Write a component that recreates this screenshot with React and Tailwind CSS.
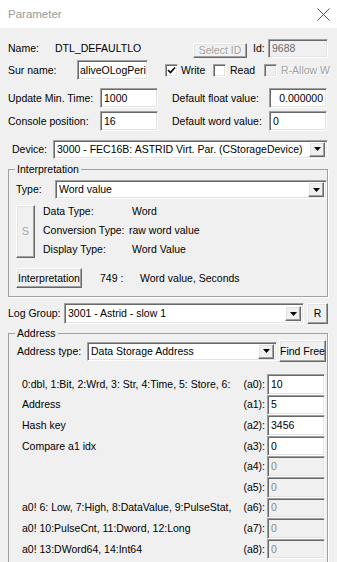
import React from "react";

const sunken =
  "bg-white border border-t-[#a0a0a0] border-l-[#a0a0a0] border-b-white border-r-white shadow-[inset_1px_1px_0_#696969,inset_-1px_-1px_0_#e3e3e3]";
const sunkenDis =
  "bg-[#f0f0f0] border border-t-[#a0a0a0] border-l-[#a0a0a0] border-b-white border-r-white shadow-[inset_1px_1px_0_#696969,inset_-1px_-1px_0_#e3e3e3]";
const raised =
  "bg-[#f0f0f0] border border-t-white border-l-white border-b-[#696969] border-r-[#696969] shadow-[inset_-1px_-1px_0_#a0a0a0,inset_1px_1px_0_#e3e3e3]";

function Input({ value, className = "", disabled = false, right = false }) {
  return (
    <div
      className={`${disabled ? sunkenDis : sunken} flex items-center px-[3px] overflow-hidden whitespace-nowrap ${
        right ? "justify-end" : ""
      } ${disabled ? "text-[#8a8a8a]" : ""} ${className}`}
    >
      {value}
    </div>
  );
}

function Arrow() {
  return (
    <svg width="7" height="4" viewBox="0 0 7 4">
      <path d="M0 0H7L3.5 4Z" fill="#000" />
    </svg>
  );
}

function Combo({ value, className = "" }) {
  return (
    <div className={`${sunken} flex items-center pl-[3px] pr-[2px] ${className}`}>
      <span className="flex-1 whitespace-nowrap overflow-hidden">{value}</span>
      <div className={`${raised} w-[16px] h-[15px] flex items-center justify-center shrink-0`}>
        <Arrow />
      </div>
    </div>
  );
}

function Check({ checked = false, disabled = false }) {
  return (
    <div
      className={`w-[13px] h-[13px] shrink-0 ${disabled ? "bg-[#f0f0f0]" : "bg-white"} border border-t-[#a0a0a0] border-l-[#a0a0a0] border-b-white border-r-white shadow-[inset_1px_1px_0_#696969,inset_-1px_-1px_0_#e3e3e3] flex items-center justify-center`}
    >
      {checked && (
        <svg width="9" height="9" viewBox="0 0 9 9">
          <path d="M1 4L3.5 6.5L8 1.5" stroke="#000" strokeWidth="1.6" fill="none" />
        </svg>
      )}
    </div>
  );
}

const dis = "text-[#a0a0a0] [text-shadow:1px_1px_0_#fff]";

function AddrRow({ label, tag, value, disabled }) {
  return (
    <div className="flex items-center h-[20.6px]">
      <span className="flex-1 pl-[13px] whitespace-nowrap">{label}</span>
      <span className="mr-[2px]">{tag}</span>
      <Input value={value} disabled={disabled} className="w-[58px] h-full mr-[2px]" />
    </div>
  );
}

export default function App() {
  return (
    <div className="w-[337px] h-[562px] overflow-hidden bg-[#f0f0f0] font-['Liberation_Sans',Arial,sans-serif] text-[10.5px] leading-[13px] text-black">
      {/* title bar */}
      <div className="h-[28px] bg-white flex items-center justify-between pl-[8px] pr-[7px]">
        <span className="text-[11.5px] text-[#999999]">Parameter</span>
        <svg width="13" height="13" viewBox="0 0 13 13">
          <path d="M0.5 0.5L12.5 12.5M12.5 0.5L0.5 12.5" stroke="#555" strokeWidth="1" />
        </svg>
      </div>

      <div className="pl-[8px]">
        {/* row 1 */}
        <div className="flex items-center h-[19px] mt-[11px]">
          <span className="w-[47px]">Name:</span>
          <span className="w-[138px]">DTL_DEFAULTLO</span>
          <div className={`${raised} w-[54px] h-[15px] flex items-center justify-center mt-[3px] ${dis}`}>
            Select ID
          </div>
          <span className="ml-[6px] w-[15px]">Id:</span>
          <Input value="9688" disabled className="w-[60px] h-[19px] !text-[#6d6d6d]" />
        </div>

        {/* row 2 */}
        <div className="flex items-center h-[20px] mt-[2px]">
          <span className="w-[69px]">Sur name:</span>
          <Input value="aliveOLogPeri" className="w-[71px] h-[20px] !px-[2px]" />
          <div className="ml-[17px]">
            <Check checked />
          </div>
          <span className="ml-[3px] w-[32px]">Write</span>
          <Check />
          <span className="ml-[4px] w-[34px]">Read</span>
          <Check disabled />
          <span className={`ml-[4px] whitespace-nowrap ${dis}`}>R-Allow W</span>
        </div>

        {/* row 3 */}
        <div className="flex items-center h-[20px] mt-[8px]">
          <span className="w-[92px]">Update Min. Time:</span>
          <Input value="1000" className="w-[58px] h-[20px]" />
          <span className="ml-[14px] w-[97px]">Default float value:</span>
          <Input value="0.000000" right className="w-[58px] h-[20px]" />
        </div>

        {/* row 4 */}
        <div className="flex items-center h-[20px] mt-[3px]">
          <span className="w-[92px]">Console position:</span>
          <Input value="16" className="w-[58px] h-[20px]" />
          <span className="ml-[14px] w-[97px]">Default word value:</span>
          <Input value="0" className="w-[58px] h-[20px]" />
        </div>

        {/* device */}
        <div className="flex items-center h-[18px] mt-[9px]">
          <span className="ml-[4px] w-[41px]">Device:</span>
          <Combo value="3000 - FEC16B: ASTRID Virt. Par. (CStorageDevice)" className="w-[275px] h-[19px]" />
        </div>
      </div>

      {/* Interpretation group */}
      <fieldset className="ml-[8px] mt-[5px] w-[320px] border border-[#a0a0a0] shadow-[1px_1px_0_#fff] pb-[8px]">
        <legend className="ml-[6px] px-[2px]">Interpretation</legend>
        <div className="flex items-center h-[19px] mt-[4px]">
          <span className="ml-[7px] w-[39px]">Type:</span>
          <Combo value="Word value" className="flex-1 h-[19px]" />
        </div>
        <div className="flex mt-[3px]">
          <div className={`${raised} ml-[7px] mt-[3px] w-[19px] h-[53px] flex items-center justify-center ${dis}`}>
            S
          </div>
          <div className="ml-[8px] flex flex-col">
            <div className="flex items-center h-[19px]">
              <span className="w-[89px]">Data Type:</span>
              <span>Word</span>
            </div>
            <div className="flex items-center h-[19px]">
              <span className="w-[86px]">Conversion Type:</span>
              <span>raw word value</span>
            </div>
            <div className="flex items-center h-[19px]">
              <span className="w-[89px]">Display Type:</span>
              <span>Word Value</span>
            </div>
          </div>
        </div>
        <div className="flex items-center mt-[9px]">
          <div className={`${raised} ml-[7px] w-[66px] h-[20px] flex items-center justify-center`}>
            Interpretation
          </div>
          <span className="ml-[18px] w-[40px]">749 :</span>
          <span>Word value, Seconds</span>
        </div>
      </fieldset>

      {/* log group */}
      <div className="flex items-center h-[21px] mt-[6px] pl-[8px]">
        <span className="w-[56px]">Log Group:</span>
        <Combo value="3001 - Astrid - slow 1" className="w-[240px] h-[21px]" />
        <div className={`${raised} ml-[3px] w-[21px] h-[21px] flex items-center justify-center`}>R</div>
      </div>

      {/* Address group */}
      <fieldset className="ml-[8px] mt-[3px] w-[320px] border border-[#a0a0a0] shadow-[1px_1px_0_#fff] pb-[8px]">
        <legend className="ml-[6px] px-[2px]">Address</legend>
        <div className="flex items-center h-[22px]">
          <span className="ml-[8px] w-[70px] whitespace-nowrap">Address type:</span>
          <Combo value="Data Storage Address" className="w-[190px] h-[19px]" />
          <div className={`${raised} ml-[2px] w-[47px] h-[22px] flex items-center justify-center whitespace-nowrap`}>
            Find Free
          </div>
        </div>
        <div className="mt-[12px] flex flex-col">
          <AddrRow label="0:dbl, 1:Bit, 2:Wrd, 3: Str, 4:Time, 5: Store, 6:" tag="(a0):" value="10" />
          <AddrRow label="Address" tag="(a1):" value="5" />
          <AddrRow label="Hash key" tag="(a2):" value="3456" />
          <AddrRow label="Compare a1 idx" tag="(a3):" value="0" />
          <AddrRow label="" tag="(a4):" value="0" disabled />
          <AddrRow label="" tag="(a5):" value="0" disabled />
          <AddrRow label="a0! 6: Low, 7:High, 8:DataValue, 9:PulseStat," tag="(a6):" value="0" disabled />
          <AddrRow label="a0! 10:PulseCnt, 11:Dword, 12:Long" tag="(a7):" value="0" disabled />
          <AddrRow label="a0! 13:DWord64, 14:Int64" tag="(a8):" value="0" disabled />
        </div>
      </fieldset>
    </div>
  );
}
